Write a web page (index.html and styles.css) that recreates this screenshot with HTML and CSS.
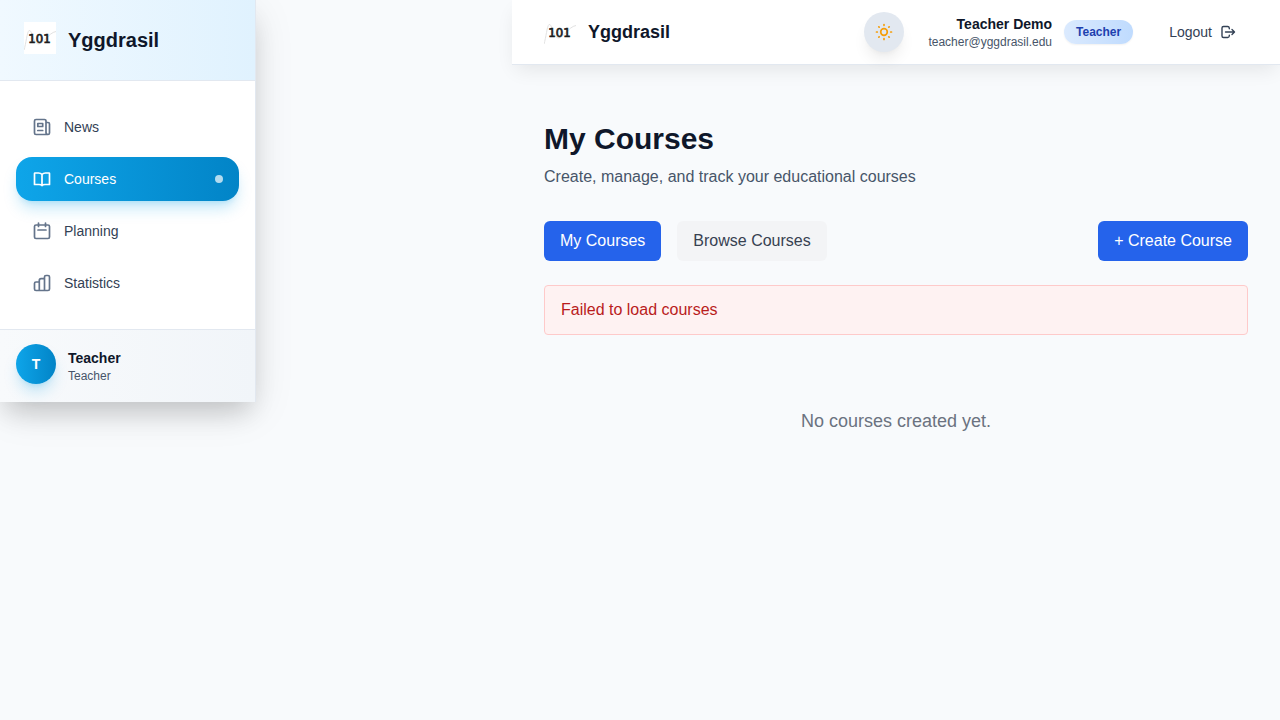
FILE: index.html
```html
<!DOCTYPE html>
<html lang="en">
<head>
<meta charset="utf-8">
<meta name="viewport" content="width=device-width, initial-scale=1">
<title>Yggdrasil – My Courses</title>
<link rel="stylesheet" href="styles.css">
</head>
<body>
<div class="layout">
  <aside class="sidebar">
    <div class="sidebar-brand">
      <svg class="logo" viewBox="0 0 32 32" aria-hidden="true">
        <rect width="32" height="32" fill="#fff"/>
        <path d="M0 28C2 22 3 10 5 8.500C8 7 9 21 14 22C20 22 24 11 32 9.500" fill="none" stroke="#e2e2e2"/>
        <text class="logo-text" x="15.500" y="21" text-anchor="middle">101</text>
      </svg>
      <span class="sidebar-title">Yggdrasil</span>
    </div>
    <nav class="nav">
      <a class="nav-link" href="#news">
        <svg class="nav-icon" viewBox="0 0 20 20" aria-hidden="true"><path d="M16 17.500H4A1.500 1.500 0 0 1 2.500 16V4A1.500 1.500 0 0 1 4 2.500H12.500A1.500 1.500 0 0 1 14 4V15.500A2 2 0 0 0 16 17.500A1.600 1.600 0 0 0 17.500 16V7A1.500 1.500 0 0 0 16 5.500H14M5.800 6.500H10.700V9.500H5.800ZM5.800 13.500H10.700"/></svg>
        News
      </a>
      <a class="nav-link active" href="#courses" aria-current="page">
        <svg class="nav-icon" viewBox="0 0 20 20" aria-hidden="true"><path d="M10 5.500C9 4.300 7.700 4 6.500 4H3Q2.500 4 2.500 4.500V15.500H7Q9.200 15.500 10 16.500Q10.800 15.500 13 15.500H17.500V4.500Q17.500 4 17 4H13.500C12.300 4 11 4.300 10 5.500ZM10 5.500V16.500"/></svg>
        Courses
        <span class="nav-dot"></span>
      </a>
      <a class="nav-link" href="#planning">
        <svg class="nav-icon" viewBox="0 0 20 20" aria-hidden="true"><rect x="2.500" y="4" width="15" height="13.500" rx="1.500"/><path d="M6.500 2V5.500M13.500 2V5.500M6 9H14"/></svg>
        Planning
      </a>
      <a class="nav-link" href="#statistics">
        <svg class="nav-icon" viewBox="0 0 20 20" aria-hidden="true"><path d="M7.300 17.500H4A1.500 1.500 0 0 1 2.500 16V10.500A1.500 1.500 0 0 1 4 9H7.300ZM12.500 17.500H7.300V7.500A1.800 1.800 0 0 1 9.100 5.700H12.500ZM12.500 17.500V4A1.500 1.500 0 0 1 14 2.500H16A1.500 1.500 0 0 1 17.500 4V16A1.500 1.500 0 0 1 16 17.500Z"/></svg>
        Statistics
      </a>
    </nav>
    <div class="profile">
      <div class="avatar">T</div>
      <div class="profile-text">
        <div class="name">Teacher</div>
        <div class="detail">Teacher</div>
      </div>
    </div>
  </aside>
  <div class="content">
    <header class="topbar">
      <div class="topbar-brand">
        <svg class="logo" viewBox="0 0 32 32" aria-hidden="true">
          <rect width="32" height="32" fill="#fff"/>
          <path d="M0 28C2 22 3 10 5 8.500C8 7 9 21 14 22C20 22 24 11 32 9.500" fill="none" stroke="#e2e2e2"/>
          <text class="logo-text" x="15.500" y="21" text-anchor="middle">101</text>
        </svg>
        <span class="topbar-title">Yggdrasil</span>
      </div>
      <div class="topbar-actions">
        <button class="theme-toggle" type="button" aria-label="Toggle theme">
          <svg class="sun" viewBox="0 0 20 20" aria-hidden="true"><circle cx="10" cy="10" r="3.300"/><path d="M10 2.500V3.300M10 16.700V17.500M2.500 10H3.300M16.700 10H17.500M4.800 4.800L5.200 5.200M14.800 14.800L15.200 15.200M4.800 15.200L5.200 14.800M14.800 5.200L15.200 4.800"/></svg>
        </button>
        <div class="account">
          <div class="account-text">
            <div class="name">Teacher Demo</div>
            <div class="detail">teacher@yggdrasil.edu</div>
          </div>
          <span class="role">Teacher</span>
        </div>
        <button class="logout" type="button">
          Logout
          <svg class="logout-icon" viewBox="0 0 16 16" aria-hidden="true"><path d="M9.300 4.700V4A1.700 1.700 0 0 0 7.600 2.500H3.500A1.500 1.500 0 0 0 2 4V12A1.500 1.500 0 0 0 3.500 13.500H7.600A1.700 1.700 0 0 0 9.300 12V11.300M5.500 8H14.300M12 5.500L14.500 8L12 10.500"/></svg>
        </button>
      </div>
    </header>
    <main class="page">
      <h1 class="page-title">My Courses</h1>
      <p class="page-subtitle">Create, manage, and track your educational courses</p>
      <div class="toolbar">
        <div class="tabs">
          <button class="button primary" type="button">My Courses</button>
          <button class="button secondary" type="button">Browse Courses</button>
        </div>
        <button class="button primary" type="button">+ Create Course</button>
      </div>
      <div class="alert" role="alert">Failed to load courses</div>
      <p class="empty">No courses created yet.</p>
    </main>
  </div>
</div>
</body>
</html>
```

FILE: styles.css
```css
*, *::before, *::after { box-sizing: border-box; }
body {
  margin: 0;
  min-height: 100vh;
  background: #f8fafc;
  color: #0f172a;
  font: 16px/24px "Liberation Sans", Arial, sans-serif;
}
button { border: 0; margin: 0; font: inherit; cursor: pointer; }
h1, p { margin: 0; }
svg { display: block; flex: none; }

.layout { display: flex; align-items: flex-start; gap: 256px; }
.sidebar {
  flex: 0 0 256px;
  background: #fff;
  border-right: 1px solid #e2e8f0;
  box-shadow: 0 10px 40px -4px rgba(0, 0, 0, 0.13), 0 16px 24px -6px rgba(0, 0, 0, 0.14);
}
.logo { width: 32px; height: 32px; }
.logo-text {
  fill: #1c1c1c;
  stroke: #1c1c1c;
  stroke-width: 0.7px;
  font-family: "DejaVu Sans Condensed", "DejaVu Sans", sans-serif;
  font-size: 13px;
}
.sidebar-brand {
  display: flex;
  align-items: center;
  gap: 12px;
  height: 81px;
  padding: 0 24px;
  border-bottom: 1px solid #e2e8f0;
  background: linear-gradient(to right, #f0f9ff, #e0f2fe);
}
.sidebar-brand .logo { margin-bottom: 4px; }
.sidebar-title { font-size: 20px; line-height: 28px; font-weight: 700; }

.nav { display: flex; flex-direction: column; gap: 8px; padding: 24px 16px; }
.nav-link {
  display: flex;
  align-items: center;
  gap: 12px;
  padding: 12px 16px;
  border-radius: 16px;
  color: #334155;
  font-size: 14px;
  line-height: 20px;
  text-decoration: none;
}
.nav-icon {
  width: 20px;
  height: 20px;
  fill: none;
  stroke: #64748b;
  stroke-width: 1.7;
  stroke-linecap: round;
  stroke-linejoin: round;
}
.active {
  color: #fff;
  background: linear-gradient(to right, #0ea5e9, #0284c7);
  box-shadow: 0 10px 15px -3px rgba(14, 165, 233, 0.25), 0 4px 6px -4px rgba(14, 165, 233, 0.25);
}
.active .nav-icon { stroke: #fff; }
.nav-dot { width: 8px; height: 8px; margin-left: auto; border-radius: 50%; background: rgba(255, 255, 255, 0.7); }

.profile {
  display: flex;
  align-items: flex-end;
  gap: 12px;
  padding: 14px 16px 18px;
  border-top: 1px solid #e2e8f0;
  background: linear-gradient(to right, #f8fafc, #f1f5f9);
}
.avatar {
  display: grid;
  place-items: center;
  width: 40px;
  height: 40px;
  border-radius: 50%;
  color: #fff;
  font-size: 14px;
  font-weight: 700;
  background: linear-gradient(to right, #0ea5e9, #0284c7);
  box-shadow: 0 10px 15px -3px rgba(14, 165, 233, 0.25), 0 4px 6px -4px rgba(14, 165, 233, 0.25);
}
.name { font-size: 14px; line-height: 20px; font-weight: 700; }
.detail { color: #475569; font-size: 12px; line-height: 16px; }

.content { flex: 1; min-width: 0; }
.topbar {
  display: flex;
  align-items: center;
  justify-content: space-between;
  height: 65px;
  padding: 0 32px;
  border-bottom: 1px solid #e2e8f0;
  background: #fff;
  box-shadow: 0 8px 20px -4px rgba(0, 0, 0, 0.09);
}
.topbar-brand, .account { display: flex; align-items: center; gap: 12px; }
.topbar-title { font-size: 18px; line-height: 28px; font-weight: 700; }
.topbar-actions { display: flex; align-items: center; gap: 24px; }
.theme-toggle {
  display: grid;
  place-items: center;
  width: 40px;
  height: 40px;
  padding: 0;
  border-radius: 50%;
  background: #e2e8f0;
  box-shadow: 0 10px 15px -3px rgba(0, 0, 0, 0.08), 0 4px 6px -4px rgba(0, 0, 0, 0.06);
}
.sun {
  width: 20px;
  height: 20px;
  fill: none;
  stroke: #f59e0b;
  stroke-width: 1.7;
  stroke-linecap: round;
}
.account-text { text-align: right; }
.role {
  padding: 4px 12px;
  border-radius: 12px;
  color: #1e40af;
  font-size: 12px;
  line-height: 16px;
  font-weight: 700;
  background: linear-gradient(to right, #dbeafe, #bfdbfe);
  box-shadow: 0 1px 2px rgba(0, 0, 0, 0.06);
}
.logout {
  display: flex;
  align-items: center;
  gap: 8px;
  padding: 8px 12px;
  background: transparent;
  color: #334155;
  font-size: 14px;
  line-height: 20px;
}
.logout-icon {
  width: 16px;
  height: 16px;
  fill: none;
  stroke: #334155;
  stroke-width: 1.4;
  stroke-linecap: round;
  stroke-linejoin: round;
}

.page { padding: 56px 32px; }
.page-title { margin-bottom: 8px; font-size: 30px; line-height: 36px; font-weight: 700; }
.page-subtitle { color: #475569; }
.toolbar { display: flex; justify-content: space-between; margin: 32px 0 24px; }
.tabs { display: flex; gap: 16px; }
.button { padding: 8px 16px; border-radius: 6px; }
.primary { color: #fff; background: #2563eb; }
.secondary { color: #374151; background: #f3f4f6; }
.alert {
  padding: 12px 16px;
  border: 1px solid #fecaca;
  border-radius: 4px;
  background: #fef2f2;
  color: #b91c1c;
}
.empty { margin-top: 72px; color: #6b7280; font-size: 18px; line-height: 28px; text-align: center; }
```
